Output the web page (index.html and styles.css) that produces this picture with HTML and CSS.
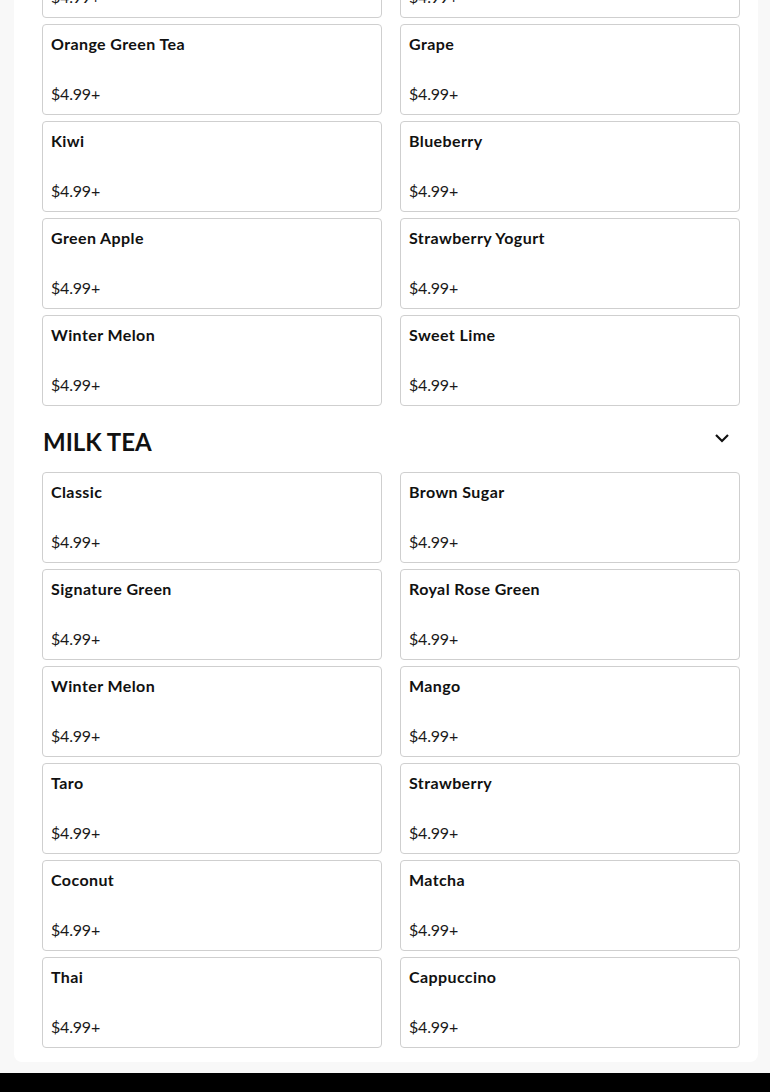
FILE: index.html
```html
<!DOCTYPE html>
<html>
<head>
<meta charset="utf-8">
<link rel="stylesheet" href="styles.css">
</head>
<body>
<div class="page">
  <main class="panel">
    <section class="section">
      <div class="grid">
        <div class="card"><div class="name">Passion Fruit</div><div class="price">$4.99+</div></div>
        <div class="card"><div class="name">Peach</div><div class="price">$4.99+</div></div>
        <div class="card"><div class="name">Orange Green Tea</div><div class="price">$4.99+</div></div>
        <div class="card"><div class="name">Grape</div><div class="price">$4.99+</div></div>
        <div class="card"><div class="name">Kiwi</div><div class="price">$4.99+</div></div>
        <div class="card"><div class="name">Blueberry</div><div class="price">$4.99+</div></div>
        <div class="card"><div class="name">Green Apple</div><div class="price">$4.99+</div></div>
        <div class="card"><div class="name">Strawberry Yogurt</div><div class="price">$4.99+</div></div>
        <div class="card"><div class="name">Winter Melon</div><div class="price">$4.99+</div></div>
        <div class="card"><div class="name">Sweet Lime</div><div class="price">$4.99+</div></div>
      </div>
    </section>
    <section class="section">
      <div class="section-head">
        <h2 class="section-title">MILK TEA</h2>
        <svg class="chevron" width="16" height="10" viewBox="0 0 16 10"><path d="M2 2 L8 8 L14 2" fill="none" stroke="#111" stroke-width="2.2"/></svg>
      </div>
      <div class="grid">
        <div class="card"><div class="name">Classic</div><div class="price">$4.99+</div></div>
        <div class="card"><div class="name">Brown Sugar</div><div class="price">$4.99+</div></div>
        <div class="card"><div class="name">Signature Green</div><div class="price">$4.99+</div></div>
        <div class="card"><div class="name">Royal Rose Green</div><div class="price">$4.99+</div></div>
        <div class="card"><div class="name">Winter Melon</div><div class="price">$4.99+</div></div>
        <div class="card"><div class="name">Mango</div><div class="price">$4.99+</div></div>
        <div class="card"><div class="name">Taro</div><div class="price">$4.99+</div></div>
        <div class="card"><div class="name">Strawberry</div><div class="price">$4.99+</div></div>
        <div class="card"><div class="name">Coconut</div><div class="price">$4.99+</div></div>
        <div class="card"><div class="name">Matcha</div><div class="price">$4.99+</div></div>
        <div class="card"><div class="name">Thai</div><div class="price">$4.99+</div></div>
        <div class="card"><div class="name">Cappuccino</div><div class="price">$4.99+</div></div>
      </div>
    </section>
  </main>
  <footer class="footer"></footer>
</div>
</body>
</html>
```
FILE: styles.css
```css
html, body {
  margin: 0;
  padding: 0;
  background: #f8f8f8;
  font-family: "Lato", "Noto Sans", sans-serif;
  color: #111;
}
.page {
  margin-top: -73px;
}
.panel {
  margin: 0 12px 0 14px;
  background: #fff;
  border-radius: 0 0 8px 8px;
  padding: 0 18px 14px 28px;
}
.grid {
  display: grid;
  grid-template-columns: 340px 340px;
  column-gap: 18px;
  row-gap: 6px;
}
.card {
  box-sizing: border-box;
  height: 91px;
  border: 1px solid #cfcfcf;
  border-radius: 4px;
  padding: 7px 8px 8px 8px;
  display: flex;
  flex-direction: column;
  justify-content: space-between;
}
.name {
  font-size: 16px;
  font-weight: 700;
  line-height: 24px;
  letter-spacing: 0.4px;
  color: #111;
}
.price {
  font-size: 16px;
  font-weight: 400;
  line-height: 24px;
  letter-spacing: -0.2px;
  color: #1a1a1a;
}
.section-head {
  display: flex;
  align-items: center;
  justify-content: space-between;
  height: 36px;
  margin: 18px 0 12px 0;
}
.section-title {
  margin: 0 0 0 1px;
  font-size: 24px;
  font-weight: 700;
  line-height: 36px;
  color: #111;
}
.chevron {
  margin-right: 10px;
  margin-bottom: 8px;
}
.footer {
  margin-top: 11px;
  height: 40px;
  background: #000;
}
```
